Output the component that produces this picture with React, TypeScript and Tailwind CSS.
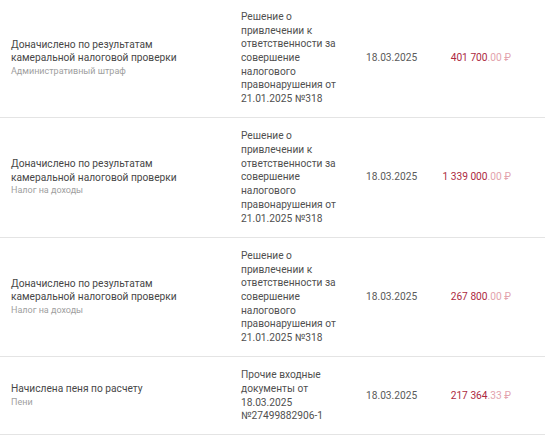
import React from "react";

type Row = {
  title: string;
  sub: string;
  doc: string;
  date: string;
  int: string;
  dec: string;
};

const rows: Row[] = [
  {
    title: "Доначислено по результатам камеральной налоговой проверки",
    sub: "Административный штраф",
    doc: "Решение о привлечении к ответственности за совершение налогового правонарушения от 21.01.2025 №318",
    date: "18.03.2025",
    int: "401 700",
    dec: ".00",
  },
  {
    title: "Доначислено по результатам камеральной налоговой проверки",
    sub: "Налог на доходы",
    doc: "Решение о привлечении к ответственности за совершение налогового правонарушения от 21.01.2025 №318",
    date: "18.03.2025",
    int: "1 339 000",
    dec: ".00",
  },
  {
    title: "Доначислено по результатам камеральной налоговой проверки",
    sub: "Налог на доходы",
    doc: "Решение о привлечении к ответственности за совершение налогового правонарушения от 21.01.2025 №318",
    date: "18.03.2025",
    int: "267 800",
    dec: ".00",
  },
  {
    title: "Начислена пеня по расчету",
    sub: "Пени",
    doc: "Прочие входные документы от 18.03.2025 №27499882906-1",
    date: "18.03.2025",
    int: "217 364",
    dec: ".33",
  },
];

export default function App() {
  return (
    <div
      className="w-[545px] h-[439px] overflow-hidden bg-white"
      style={{ fontFamily: "Roboto, 'Noto Sans', sans-serif" }}
    >
      <div className="-mt-[1.5px]">
        {rows.map((r, i) => (
          <div
            key={i}
            className="flex items-center border-b border-[#e4e4e4] py-[11.3px] text-[10.2px] leading-[13.7px]"
          >
            <div className="w-[241px] shrink-0 pl-[11px] pr-[10px]">
              <div className="text-[#474747] w-[190px]">{r.title}</div>
              <div className="text-[9px] leading-[13px] text-[#a0a0a0]">{r.sub}</div>
            </div>
            <div className="w-[125px] shrink-0">
              <div className="w-[106px] text-[#505050]">{r.doc}</div>
            </div>
            <div className="w-[70px] shrink-0 text-[#5a5a5a]">{r.date}</div>
            <div className="flex-1 text-right pr-[34px] whitespace-nowrap">
              <span className="text-[#ad2a3f]">{r.int}</span>
              <span className="text-[#e3a3ad]">{r.dec} ₽</span>
            </div>
          </div>
        ))}
      </div>
    </div>
  );
}
